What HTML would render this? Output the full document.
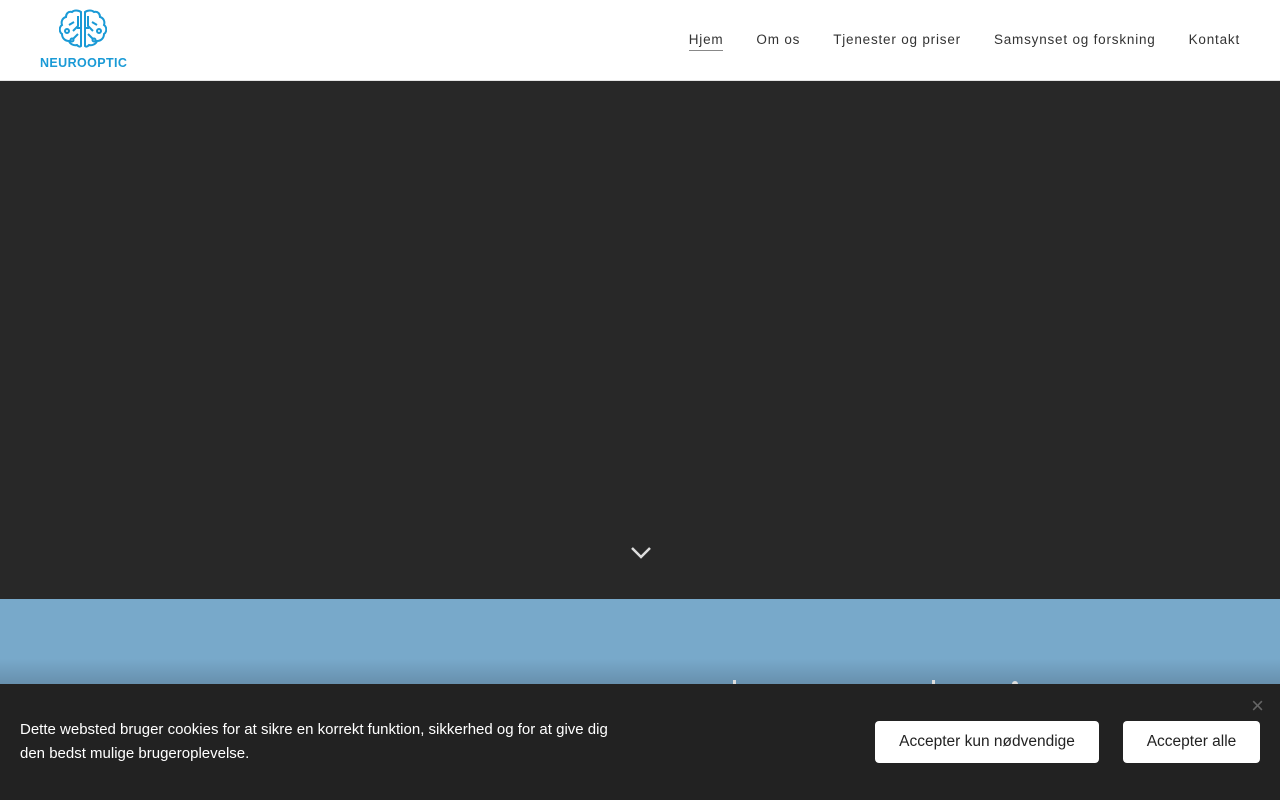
<!DOCTYPE html>
<html><head><meta charset="utf-8"><style>
*{margin:0;padding:0;box-sizing:border-box}
body{width:1280px;height:800px;overflow:hidden;font-family:"Liberation Sans",sans-serif;position:relative;background:#282828}
header{position:absolute;top:0;left:0;width:1280px;height:81px;background:#fff;border-bottom:1px solid #e4e4e4}
nav{position:absolute;top:32px;right:40px;display:flex;gap:33px;font-size:13.5px;color:#333;letter-spacing:.8px}
nav span.a{border-bottom:1px solid #888;padding-bottom:3px}
.logo{position:absolute;left:59px;top:9px}
.logotxt{position:absolute;left:40px;top:56px;font-size:12.5px;letter-spacing:.4px;color:#1a9ad6;font-weight:bold}
.hero{position:absolute;top:81px;left:0;width:1280px;height:518px;background:#282828}
.chev{position:absolute;left:631px;top:546px}
.blue{position:absolute;top:599px;left:0;width:1280px;height:201px;background:linear-gradient(#78a9ca 0,#78a9ca 60px,#6790ad 85px)}
.cookie{position:absolute;top:684px;left:0;width:1280px;height:116px;background:#222;color:#fff;font-family:"Liberation Sans",sans-serif}
.cookie p{position:absolute;left:20px;top:34px;width:600px;font-size:15px;line-height:24px}
.btn{position:absolute;top:37px;height:42px;background:#fff;color:#222;border-radius:4px;font-size:15.5px;line-height:42px;text-align:center}
.x{position:absolute;right:16px;top:9px;color:#666;font-size:22px}
</style></head><body>
<header>
<svg class="logo" width="48" height="46" viewBox="0 0 48 46" fill="none" stroke="#1a9ad6" stroke-width="2">
<path d="M22 3c-3-2-7-2-9 0-4-1-6 2-6 5-4 1-5 5-4 8-3 2-3 7 0 9 0 4 3 7 7 7 1 3 5 5 8 4 2 2 3 2 4 1z"/>
<path d="M26 3c3-2 7-2 9 0 4-1 6 2 6 5 4 1 5 5 4 8 3 2 3 7 0 9 0 4-3 7-7 7-1 3-5 5-8 4-2 2-3 2-4 1z"/>
<path d="M19 7v10l-5 5M15 13l-5 3M19 25l-5 5M22 19h-4M29 7v10l5 5M33 13l5 3M29 25l5 5M26 19h4"/>
<circle cx="8" cy="22" r="2"/><circle cx="40" cy="22" r="2"/><circle cx="13" cy="31" r="1.5"/><circle cx="35" cy="31" r="1.5"/>
</svg>
<div class="logotxt">NEUROOPTIC</div>
<nav><span class="a">Hjem</span><span>Om os</span><span>Tjenester og priser</span><span>Samsynset og forskning</span><span>Kontakt</span></nav>
</header>
<div class="hero"></div>
<svg class="chev" width="20" height="14" viewBox="0 0 20 14"><path d="M1 2l9 9 9-9" fill="none" stroke="#ddd" stroke-width="2.5"/></svg>
<div class="blue">
<div style="position:absolute;left:733px;top:81px;width:3px;height:4px;background:#ddd"></div>
<div style="position:absolute;left:932px;top:81px;width:3px;height:4px;background:#ddd"></div>
<div style="position:absolute;left:1012px;top:82px;width:6px;height:3px;background:#ddd;border-radius:3px 3px 0 0"></div>
</div>
<div class="cookie">
<p>Dette websted bruger cookies for at sikre en korrekt funktion, sikkerhed og for at give dig den bedst mulige brugeroplevelse.</p>
<div class="btn" style="left:875px;width:224px">Accepter kun nødvendige</div>
<div class="btn" style="left:1123px;width:137px">Accepter alle</div>
<div class="x">×</div>
</div>
</body></html>
